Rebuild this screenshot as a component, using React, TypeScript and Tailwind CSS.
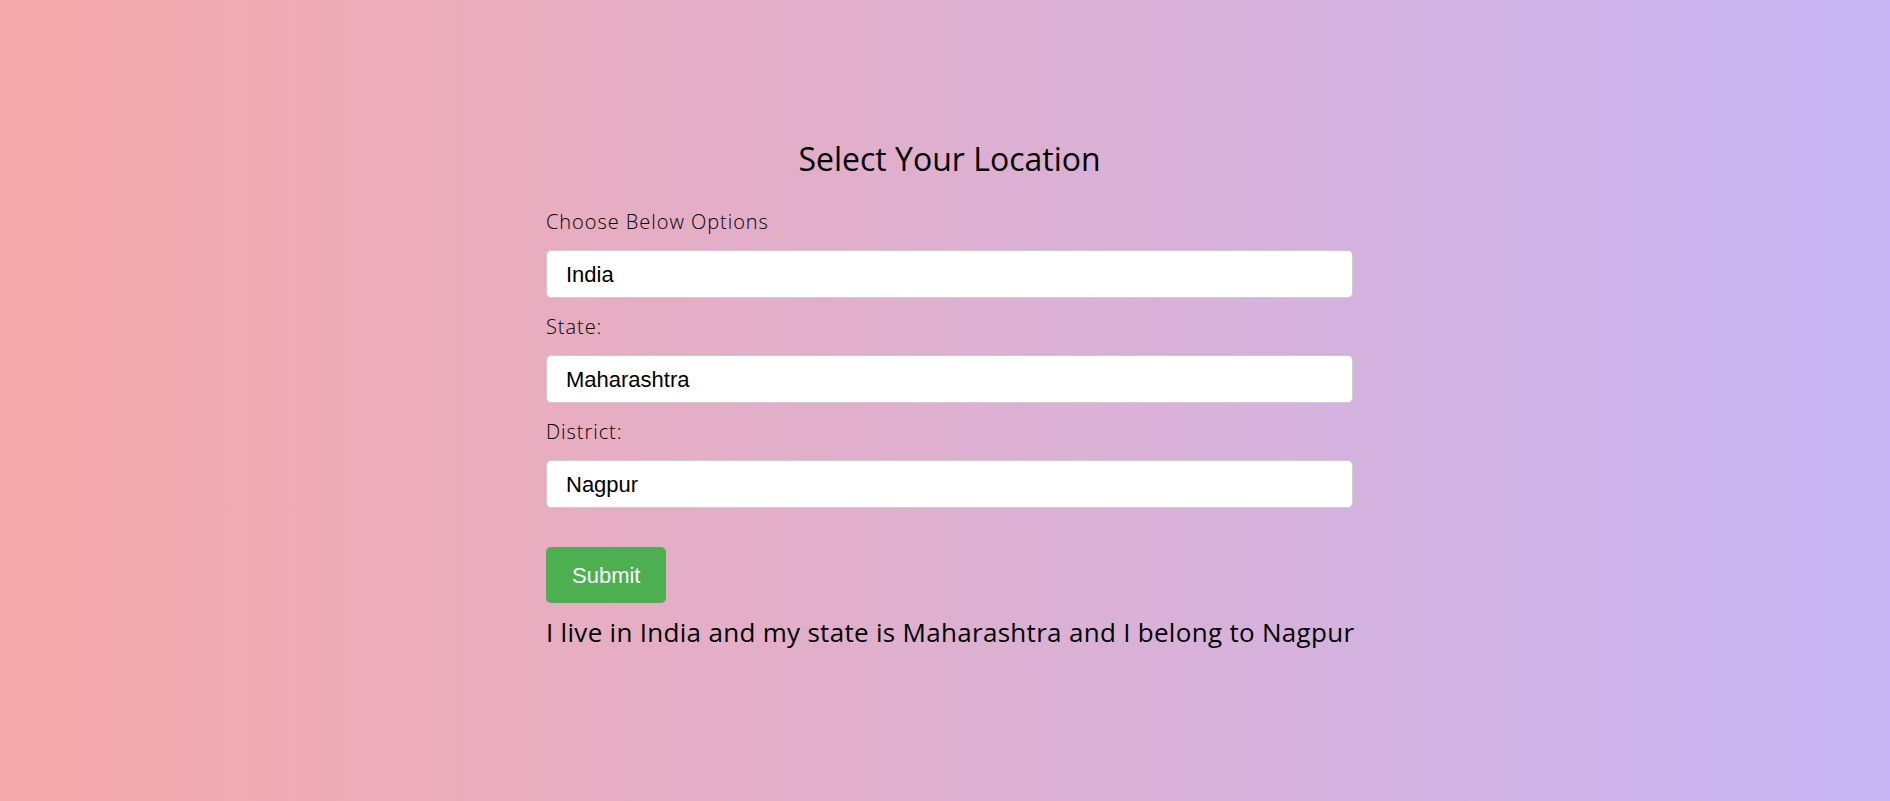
import React, { useState } from "react";

const data: Record<string, Record<string, string[]>> = {
  India: {
    Maharashtra: ["Nagpur", "Pune", "Mumbai"],
    Gujarat: ["Ahmedabad", "Surat"],
  },
  Nepal: {
    Bagmati: ["Kathmandu", "Lalitpur"],
  },
};

const labelCls =
  "block h-[28px] leading-[28px] text-[20px] font-light text-black tracking-[0.95px]";
const selectCls =
  "block w-full h-[48px] appearance-none rounded-[5px] border border-[#cccccc] bg-white pl-[19px] text-[22px] text-black outline-none";

const App = () => {
  const [country, setCountry] = useState("India");
  const [state, setState] = useState("Maharashtra");
  const [district, setDistrict] = useState("Nagpur");
  const [result, setResult] = useState(
    "I live in India and my state is Maharashtra and I belong to Nagpur"
  );

  const states = Object.keys(data[country] || {});
  const districts = (data[country] || {})[state] || [];

  return (
    <div className="h-[801px] w-full bg-gradient-to-r from-[#f5a8a9] to-[#c6b5f4] flex justify-center pl-[9px] font-['Open_Sans',sans-serif]">
      <div className="w-[807px] pt-[139px]">
        <h2 className="h-[40px] leading-[40px] text-center text-[32px] font-normal text-black">
          Select Your Location
        </h2>

        <label className={`${labelCls} mt-[29px]`}>Choose Below Options</label>
        <select
          className={`${selectCls} mt-[14px] font-['Liberation_Sans',Arial,sans-serif]`}
          value={country}
          onChange={(e) => setCountry(e.target.value)}
        >
          {Object.keys(data).map((c) => (
            <option key={c}>{c}</option>
          ))}
        </select>

        <label className={`${labelCls} mt-[15px]`}>State:</label>
        <select
          className={`${selectCls} mt-[14px] font-['Liberation_Sans',Arial,sans-serif]`}
          value={state}
          onChange={(e) => setState(e.target.value)}
        >
          {states.map((s) => (
            <option key={s}>{s}</option>
          ))}
        </select>

        <label className={`${labelCls} mt-[15px]`}>District:</label>
        <select
          className={`${selectCls} mt-[14px] font-['Liberation_Sans',Arial,sans-serif]`}
          value={district}
          onChange={(e) => setDistrict(e.target.value)}
        >
          {districts.map((d) => (
            <option key={d}>{d}</option>
          ))}
        </select>

        <button
          onClick={() =>
            setResult(
              `I live in ${country} and my state is ${state} and I belong to ${district}`
            )
          }
          className="mt-[39px] block h-[56px] rounded-[5px] bg-[#4caf50] px-[26px] text-[22px] text-white font-['Liberation_Sans',Arial,sans-serif]"
        >
          Submit
        </button>

        <p className="mt-[11px] h-[36px] leading-[36px] text-[26px] text-black whitespace-nowrap tracking-[0.3px]">
          {result}
        </p>
      </div>
    </div>
  );
};

export default App;
